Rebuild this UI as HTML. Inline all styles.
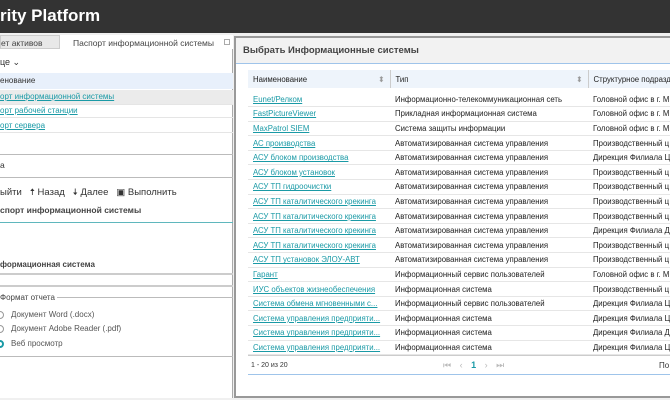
<!DOCTYPE html><html><head><meta charset="utf-8"><style>
*{margin:0;padding:0;box-sizing:border-box}
body{width:670px;height:400px;overflow:hidden;background:#fff;font-family:"Liberation Sans","DejaVu Sans",sans-serif;position:relative;color:#333}
.a{position:absolute;white-space:nowrap}
.top{left:0;top:0;width:670px;height:33px;background:#333}
.ln{color:#1a9aa6;text-decoration:underline}
table{border-collapse:collapse;font-size:7.8px;position:absolute;left:248px;top:70px;width:430px;table-layout:fixed;color:#222}
td,th{height:14.6px;padding:0 5px;white-space:nowrap;overflow:hidden;text-align:left;border-bottom:1px solid #e6e6e6}
th{font-weight:normal;height:18px;background:#eef4fb;border-right:1px solid #ccc;border-bottom:none}
td a{color:#1a9aa6;text-decoration:underline}
</style></head><body>
<div class="a top"></div>
<div class="a" style="left:0;top:6px;color:#fff;font-size:17px;font-weight:bold">rity Platform</div>
<div class="a" style="left:0;top:33px;width:670px;height:367px;background:#f0f0f0"></div>
<div class="a" style="left:0;top:35px;width:233px;height:363px;background:#fff;border-right:1px solid #aaa"></div>
<div class="a" style="left:0;top:35px;width:60px;height:14px;background:#e8e8e8;border:1px solid #ccc;font-size:8.5px;padding:2px 0 0 0;color:#444">ет активов</div>
<div class="a" style="left:60px;top:35px;width:173px;height:14px;background:#fff;font-size:8.5px;padding:3px 0 0 13px;color:#444">Паспорт информационной системы</div>
<div class="a" style="left:224px;top:39px;width:6px;height:6px;border:1px solid #aaa"></div>
<div class="a" style="left:0;top:57px;font-size:9px">це &#8964;</div>
<div class="a" style="left:0;top:73px;width:233px;height:16px;background:#e8f0fb;font-size:8px;padding:3px 0 0 0">енование</div>
<div class="a" style="left:0;top:90px;width:233px;height:14px;background:#ebebeb;font-size:8px;padding:2px 0 0 0" ><span class="ln">орт информационной системы</span></div>
<div class="a" style="left:0;top:106px;font-size:8px"><span class="ln">орт рабочей станции</span></div>
<div class="a" style="left:0;top:121px;font-size:8px"><span class="ln">орт сервера</span></div>
<div class="a" style="left:0;top:104px;width:233px;border-top:1px solid #e5e5e5"></div>
<div class="a" style="left:0;top:117px;width:233px;border-top:1px solid #e5e5e5"></div>
<div class="a" style="left:0;top:132px;width:233px;border-top:1px solid #e5e5e5"></div>
<div class="a" style="left:0;top:154px;width:233px;border-top:1px solid #bbb"></div>
<div class="a" style="left:0;top:160px;font-size:8.5px">а</div>
<div class="a" style="left:0;top:177px;width:233px;border-top:1px solid #bbb"></div>
<div class="a" style="left:0;top:185px;font-size:9.5px">ыйти &nbsp;&nbsp;🠅 Назад &nbsp;&nbsp;🠇 Далее &nbsp;&nbsp;▣ Выполнить</div>
<div class="a" style="left:0;top:205px;font-size:8.5px;font-weight:bold;color:#444">спорт информационной системы</div>
<div class="a" style="left:0;top:222px;width:233px;border-top:1px solid #5fb7bd"></div>
<div class="a" style="left:0;top:260px;font-size:8px;font-weight:bold;color:#444">формационная система</div>
<div class="a" style="left:0;top:273px;width:233px;height:14px;border-top:2px solid #ccc;border-bottom:2px solid #ccc"></div>
<div class="a" style="left:0;top:297px;width:233px;border-top:1px solid #bbb"></div>
<div class="a" style="left:0;top:293px;font-size:8px;background:#fff;padding-right:2px;color:#444">Формат отчета</div>
<div class="a" style="left:-4px;top:311px;width:8px;height:8px;border:1px solid #999;border-radius:50%"></div>
<div class="a" style="left:-4px;top:325px;width:8px;height:8px;border:1px solid #999;border-radius:50%"></div>
<div class="a" style="left:-4px;top:340px;width:8px;height:8px;border:2px solid #1a9aa6;border-radius:50%;background:#fff"></div>
<div class="a" style="left:11px;top:310px;font-size:8px;color:#555">Документ Word (.docx)</div>
<div class="a" style="left:11px;top:324px;font-size:8px;color:#555">Документ Adobe Reader (.pdf)</div>
<div class="a" style="left:11px;top:339px;font-size:8px;color:#555">Веб просмотр</div>
<div class="a" style="left:0;top:356px;width:233px;border-top:1px solid #bbb"></div>
<div class="a" style="left:234px;top:36px;width:440px;height:362px;background:#fff;border:2px solid #999;overflow:hidden">
<div style="height:26px;background:#f2f2f2;border-bottom:1px solid #9fc4ea;font-size:9.5px;font-weight:bold;color:#444;padding:7px 0 0 7px">Выбрать Информационные системы</div>
</div>
<table>
<colgroup><col style="width:142px"><col style="width:198px"><col style="width:90px"></colgroup>
<tr><th>Наименование<span style="float:right;color:#999">⬍</span></th><th>Тип<span style="float:right;color:#999">⬍</span></th><th>Структурное подразделение</th></tr>
<tr><td style="height:4px;border:none" colspan=3></td></tr>
<tr><td><a>Eunet/Релком</a></td><td>Информационно-телекоммуникационная сеть</td><td>Головной офис в г. М</td></tr>
<tr><td><a>FastPictureViewer</a></td><td>Прикладная информационная система</td><td>Головной офис в г. М</td></tr>
<tr><td><a>MaxPatrol SIEM</a></td><td>Система защиты информации</td><td>Головной офис в г. М</td></tr>
<tr><td><a>АС производства</a></td><td>Автоматизированная система управления</td><td>Производственный ц</td></tr>
<tr><td><a>АСУ блоком производства</a></td><td>Автоматизированная система управления</td><td>Дирекция Филиала Ц</td></tr>
<tr><td><a>АСУ блоком установок</a></td><td>Автоматизированная система управления</td><td>Производственный ц</td></tr>
<tr><td><a>АСУ ТП гидроочистки</a></td><td>Автоматизированная система управления</td><td>Производственный ц</td></tr>
<tr><td><a>АСУ ТП каталитического крекинга</a></td><td>Автоматизированная система управления</td><td>Производственный ц</td></tr>
<tr><td><a>АСУ ТП каталитического крекинга</a></td><td>Автоматизированная система управления</td><td>Производственный ц</td></tr>
<tr><td><a>АСУ ТП каталитического крекинга</a></td><td>Автоматизированная система управления</td><td>Дирекция Филиала Д</td></tr>
<tr><td><a>АСУ ТП каталитического крекинга</a></td><td>Автоматизированная система управления</td><td>Производственный ц</td></tr>
<tr><td><a>АСУ ТП установок ЭЛОУ-АВТ</a></td><td>Автоматизированная система управления</td><td>Производственный ц</td></tr>
<tr><td><a>Гарант</a></td><td>Информационный сервис пользователей</td><td>Головной офис в г. М</td></tr>
<tr><td><a>ИУС объектов жизнеобеспечения</a></td><td>Информационная система</td><td>Производственный ц</td></tr>
<tr><td><a>Система обмена мгновенными с...</a></td><td>Информационный сервис пользователей</td><td>Дирекция Филиала Ц</td></tr>
<tr><td><a>Система управления предприяти...</a></td><td>Информационная система</td><td>Дирекция Филиала Ц</td></tr>
<tr><td><a>Система управления предприяти...</a></td><td>Информационная система</td><td>Дирекция Филиала Д</td></tr>
<tr><td><a>Система управления предприяти...</a></td><td>Информационная система</td><td>Дирекция Филиала Ц</td></tr>
</table>
<div class="a" style="left:248px;top:355px;width:422px;border-top:1px solid #ccc"></div>
<div class="a" style="left:251px;top:362px;font-size:7px">1 - 20 из 20</div>
<div class="a" style="left:443px;top:360px;font-size:9px;color:#bbb;word-spacing:6px">⏮ ‹ <b style="color:#1a9aa6">1</b> › ⏭</div>
<div class="a" style="left:659px;top:361px;font-size:8px">По</div>
<div class="a" style="left:248px;top:374px;width:422px;border-top:1px solid #9fc4ea"></div>
</body></html>
